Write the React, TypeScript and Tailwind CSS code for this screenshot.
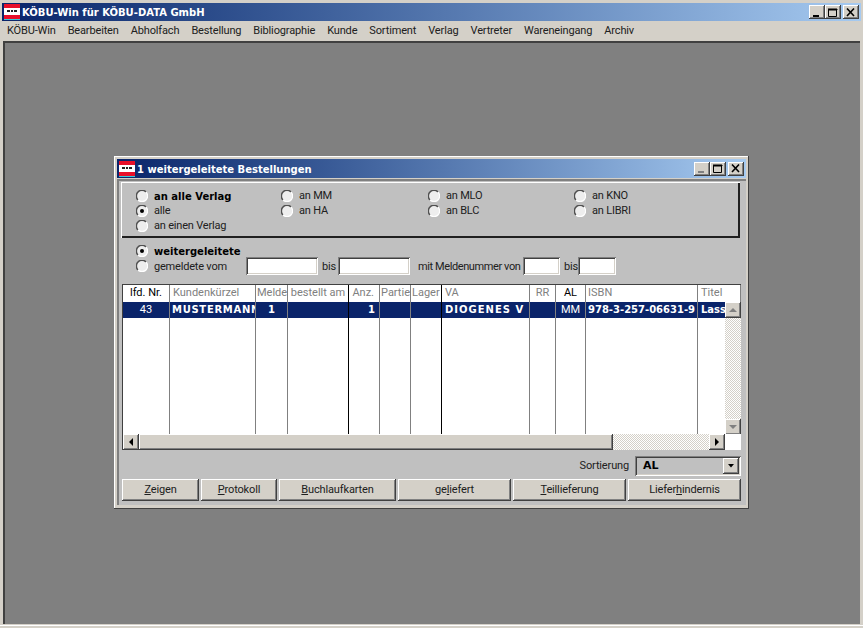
import type { ReactNode } from "react";

const raised =
  "shadow-[inset_-1px_-1px_0_#404040,inset_1px_1px_0_#ffffff,inset_-2px_-2px_0_#808080,inset_2px_2px_0_#d4d0c8]";
const sunken =
  "shadow-[inset_1px_1px_0_#808080,inset_-1px_-1px_0_#ffffff,inset_2px_2px_0_#404040,inset_-2px_-2px_0_#d4d0c8]";
const dither =
  "bg-[repeating-conic-gradient(#d4d0c8_0_25%,#ffffff_0_50%)] bg-[length:2px_2px]";
const uiFont = "font-['Roboto','Liberation_Sans',sans-serif]";
const boldFont = "font-['DejaVu_Sans',sans-serif] font-bold";

const menu = [
  "KÖBU-Win",
  "Bearbeiten",
  "Abholfach",
  "Bestellung",
  "Bibliographie",
  "Kunde",
  "Sortiment",
  "Verlag",
  "Vertreter",
  "Wareneingang",
  "Archiv",
];

type Col = {
  w: number;
  head: string;
  align: string;
  cellAlign?: string;
  dark?: boolean;
  headBlack?: boolean;
  cell?: string;
  bold?: boolean;
  tracking?: string;
};

const cols: Col[] = [
  { w: 47, head: "lfd. Nr.", align: "text-center", headBlack: true, cell: "43" },
  { w: 86, head: "Kundenkürzel", align: "text-left pl-[3px]", cellAlign: "text-left pl-[2px]", cell: "MUSTERMANN", bold: true, tracking: "tracking-[0.7px]" },
  { w: 32, head: "Melde", align: "text-left pl-[1px]", cellAlign: "text-center", cell: "1", bold: true },
  { w: 61, head: "bestellt am", align: "text-center", dark: true },
  { w: 31, head: "Anz.", align: "text-right pr-[5px]", cellAlign: "text-right pr-[4px]", cell: "1", bold: true },
  { w: 31, head: "Partie", align: "text-left pl-[1px]" },
  { w: 31, head: "Lager", align: "text-left pl-[1px]", dark: true },
  { w: 88, head: "VA", align: "text-left pl-[3px]", cell: "DIOGENES V", bold: true, tracking: "tracking-[1px]" },
  { w: 26, head: "RR", align: "text-center" },
  { w: 30, head: "AL", align: "text-center", headBlack: true, cell: "MM" },
  { w: 112, head: "ISBN", align: "text-left pl-[2px]", cell: "978-3-257-06631-9", bold: true },
  { w: 43, head: "Titel", align: "text-left pl-[3px]", cell: "Lassen", bold: true },
];

function Logo() {
  return (
    <svg width="16" height="16" viewBox="0 0 16 16" className="shrink-0">
      <rect width="16" height="16" fill="#e8102a" />
      <rect y="4" width="16" height="7" fill="#ffffff" />
      <rect x="3" y="6" width="3" height="2" fill="#222222" />
      <rect x="7" y="6" width="2" height="2" fill="#222222" />
      <rect x="10" y="6" width="3" height="2" fill="#222222" />
      <rect y="15" width="16" height="1" fill="#38c8d8" />
    </svg>
  );
}

function CapButton({ kind, muted }: { kind: "min" | "max" | "close"; muted?: boolean }) {
  const c = muted ? "#808080" : "#000000";
  return (
    <div className={`w-4 h-[14px] bg-[#d4d0c8] flex items-center justify-center ${raised}`}>
      <svg width="10" height="9" viewBox="0 0 10 9">
        {kind === "min" && <rect x="1" y="7" width="6" height="2" fill={c} />}
        {kind === "max" && <path d="M0.5 1.5h8v7h-8z M0 1h9v1H0z" fill="none" stroke={c} />}
        {kind === "close" && <path d="M1 0.5l7 7.5M8 0.5L1 8" stroke={c} strokeWidth="1.6" />}
      </svg>
    </div>
  );
}

function TitleBar({ title, muted, className }: { title: string; muted?: boolean; className: string }) {
  return (
    <div className={`flex items-center bg-gradient-to-r from-[#0a246a] to-[#a6caf0] ${className}`}>
      <Logo />
      <span className={`ml-[2px] pt-px text-white text-[10px] ${boldFont}`}>{title}</span>
      <div className="ml-auto flex items-center mr-[2px]">
        <CapButton kind="min" muted={muted} />
        <CapButton kind="max" />
        <div className="w-[2px]" />
        <CapButton kind="close" />
      </div>
    </div>
  );
}

function Radio({ label, checked, bold }: { label: string; checked?: boolean; bold?: boolean }) {
  return (
    <div className="flex items-center h-[15px]">
      <svg width="12" height="12" viewBox="0 0 12 12" className="shrink-0">
        <circle cx="6" cy="6" r="5.5" fill="#eeeeee" />
        <path d="M10 2A5.6 5.6 0 0 0 2 10" fill="none" stroke="#505050" strokeWidth="1.5" />
        <path d="M2 10A5.6 5.6 0 0 0 10 2" fill="none" stroke="#ffffff" strokeWidth="1.2" />
        {checked && <circle cx="6" cy="6" r="2" fill="#000000" />}
      </svg>
      <span
        className={`ml-[6px] pt-[2px] ${
          bold ? `text-[10px] ${boldFont} text-black` : "text-[11px] tracking-[-0.2px] text-[#202020]"
        }`}
      >
        {label}
      </span>
    </div>
  );
}

function Field({ w }: { w: string }) {
  return <div className={`h-[18px] bg-white shrink-0 ${w} ${sunken}`} />;
}

function Btn({ w, children }: { w: string; children: ReactNode }) {
  return (
    <div className={`h-[22px] pt-px bg-[#d4d0c8] flex items-center justify-center text-[11px] tracking-[-0.15px] text-[#202020] ${w} ${raised}`}>
      {children}
    </div>
  );
}

function Arrow({ d, c = "#000000" }: { d: string; c?: string }) {
  return (
    <svg width={8} height={8} viewBox="0 0 8 8">
      <path d={d} fill={c} />
    </svg>
  );
}

function Table() {
  return (
    <div className="relative mt-[9px] ml-px w-[619px] h-[166px] bg-white overflow-hidden shadow-[inset_1px_1px_0_#404040] pt-px pl-px">
      <div className="flex h-full">
        {cols.map((c, i) => (
          <div
            key={i}
            style={{ width: c.w }}
            className={`shrink-0 h-full overflow-hidden whitespace-nowrap border-r ${
              c.dark ? "border-black" : "border-[#808080]"
            }`}
          >
            <div
              className={`h-[17px] leading-[15px] text-[11px] ${c.align} ${
                c.headBlack ? "text-black" : "text-[#808080]"
              }`}
            >
              {c.head}
            </div>
            <div
              className={`h-[16px] leading-[16px] bg-[#0a246a] text-white overflow-hidden ${c.cellAlign ?? c.align} ${
                c.bold ? `text-[10px] ${boldFont}` : "text-[11px]"
              } ${c.tracking ?? ""}`}
            >
              {c.cell}
            </div>
          </div>
        ))}
      </div>
      {/* vertical scrollbar */}
      <div className={`absolute left-[603px] top-[18px] w-[16px] h-[133px] flex flex-col ${dither}`}>
        <div className={`h-4 w-4 bg-[#d4d0c8] flex items-center justify-center ${raised}`}>
          <Arrow d="M0 6h8L4 2z" c="#808080" />
        </div>
        <div className={`mt-auto h-4 w-4 bg-[#d4d0c8] flex items-center justify-center ${raised}`}>
          <Arrow d="M0 2h8L4 6z" c="#808080" />
        </div>
      </div>
      {/* horizontal scrollbar */}
      <div className={`absolute left-px top-[150px] w-[602px] h-4 flex ${dither}`}>
        <div className={`h-4 w-4 bg-[#d4d0c8] flex items-center justify-center ${raised}`}>
          <Arrow d="M6 0v8L2 4z" />
        </div>
        <div className={`h-4 w-[474px] bg-[#d4d0c8] ${raised}`} />
        <div className={`ml-auto h-4 w-4 bg-[#d4d0c8] flex items-center justify-center ${raised}`}>
          <Arrow d="M2 0v8l4-4z" />
        </div>
      </div>
      <div className="absolute left-[603px] top-[150px] w-4 h-4 bg-white" />
    </div>
  );
}

function Dialog() {
  return (
    <div className="absolute left-[111px] top-[115px] w-[635px] h-[353px] bg-[#d4d0c8] shadow-[inset_-1px_-1px_0_#404040,inset_1px_1px_0_#ffffff] p-[3px]">
      <TitleBar title="1 weitergeleitete Bestellungen" muted className="h-[19px] pl-[2px]" />
      <div className="h-[326px] mt-px bg-[#c0c0c0] shadow-[inset_2px_2px_0_#808080] pl-[4px] pt-[3px]">
        <div className="w-[619px] h-[56px] shadow-[inset_1px_1px_0_#ffffff,inset_-2px_-2px_0_#202020] pt-[6px] pl-[15px] grid grid-cols-[145px_147px_146px_1fr] grid-rows-[15px_15px_15px]">
          <Radio label="an alle Verlag" bold />
          <Radio label="an MM" />
          <Radio label="an MLO" />
          <Radio label="an KNO" />
          <Radio label="alle" checked />
          <Radio label="an HA" />
          <Radio label="an BLC" />
          <Radio label="an LIBRI" />
          <Radio label="an einen Verlag" />
        </div>
        <div className="ml-[15px] mt-[5px]">
          <Radio label="weitergeleitete" checked bold />
          <div className="flex items-center h-[18px] -mt-[1px] text-[11px] tracking-[-0.2px] text-[#202020]">
            <div className="w-[110px]">
              <Radio label="gemeldete vom" />
            </div>
            <Field w="w-[72px]" />
            <span className="w-[20px] pl-[4px] pt-[2px]">bis</span>
            <Field w="w-[72px]" />
            <span className="ml-[8px] w-[105px] whitespace-nowrap pt-[2px] tracking-[-0.4px]">mit Meldenummer von</span>
            <Field w="w-[37px]" />
            <span className="w-[18px] pl-[4px] pt-[2px]">bis</span>
            <Field w="w-[38px]" />
          </div>
        </div>
        <Table />
        <div className="flex justify-end items-center w-[620px] mt-[6px] h-[20px] text-[11px] tracking-[-0.15px] text-[#202020]">
          <span className="mr-[6px] pt-px">Sortierung</span>
          <div className={`relative w-[106px] h-[20px] bg-[#c0c0c0] ${sunken} flex items-center pl-[8px] text-black tracking-normal ${boldFont}`}>
            AL
            <div className={`absolute right-[2px] top-[2px] w-4 h-4 bg-[#d4d0c8] flex items-center justify-center ${raised}`}>
              <Arrow d="M1 2h6L4 5.5z" />
            </div>
          </div>
        </div>
        <div className="flex ml-px mt-[3px] w-[619px] justify-between">
          <Btn w="w-[77px]"><span><u>Z</u>eigen</span></Btn>
          <Btn w="w-[76px]"><span><u>P</u>rotokoll</span></Btn>
          <Btn w="w-[117px]"><span><u>B</u>uchlaufkarten</span></Btn>
          <Btn w="w-[113px]"><span>ge<u>l</u>iefert</span></Btn>
          <Btn w="w-[113px]"><span><u>T</u>eillieferung</span></Btn>
          <Btn w="w-[113px]"><span>Liefer<u>h</u>indernis</span></Btn>
        </div>
      </div>
    </div>
  );
}

export default function App() {
  return (
    <div className={`w-[863px] h-[628px] bg-[#d4d0c8] flex flex-col overflow-hidden ${uiFont}`}>
      <div className="h-[3px] shrink-0" />
      <TitleBar title="KÖBU-Win für KÖBU-DATA GmbH" className="h-[18px] mx-[2px] pl-[2px] shrink-0" />
      <div className="h-[20px] shrink-0 flex items-center pl-[7px] pt-[1px] gap-[12px] text-[11px] tracking-[-0.15px] text-[#202020]">
        {menu.map((m) => (
          <span key={m}>{m}</span>
        ))}
      </div>
      <div className="relative h-[583px] mx-[3px] bg-[#808080] shadow-[inset_2px_2px_0_#404040]">
        <Dialog />
      </div>
      <div className="mt-px h-px bg-white" />
    </div>
  );
}
